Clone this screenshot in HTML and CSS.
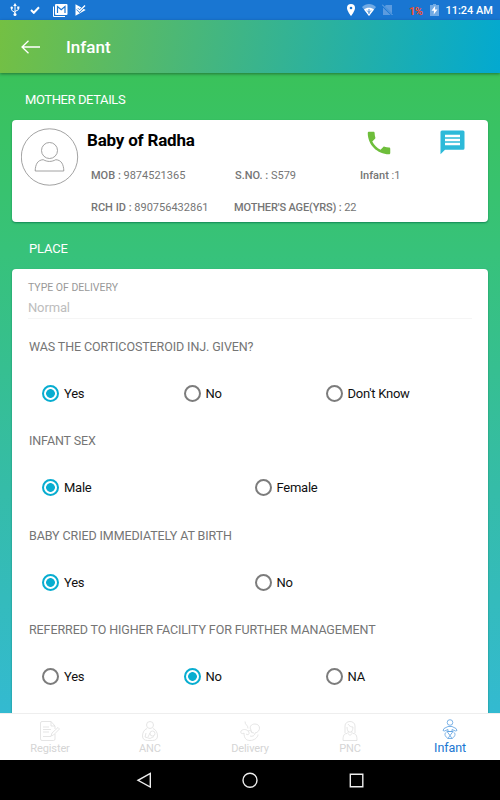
FILE: index.html
```html
<!DOCTYPE html>
<html lang="en">
<head>
    <meta charset="UTF-8">
    <meta name="viewport" content="width=device-width, initial-scale=1.0">
    <title>Infant</title>
    <link rel="stylesheet" href="styles.css">
</head>
<body>
    <!-- Status Bar -->
    <div class="status-bar">
        <div class="status-left">
            <svg class="usb-icon" width="10" height="14" viewBox="0 0 10 14">
                <path d="M5 2v9M1.7 5v2.3L5 9.6M8.3 4.5v2.3L5 8.5" fill="none" stroke="#fff"/>
                <path d="M5 0l1.8 3H3.2z" fill="#fff"/>
                <circle cx="5" cy="11.5" r="1.5" fill="#fff"/>
                <circle cx="1.7" cy="4.8" r="1.2" fill="#fff"/>
                <path d="M7.2 3.5h2.200v2.200H7.200z" fill="#fff"/>
            </svg>
            <svg class="check-icon" width="10" height="8" viewBox="0 0 10 8">
                <path d="M1 4l2.800 2.800L9 1.200" fill="none" stroke="#fff" stroke-width="2"/>
            </svg>
            <svg class="mail-icon" width="15" height="13" viewBox="0 0 15 13">
                <path d="M.5 2.500v10h11.500" fill="none" stroke="#fff"/>
                <path d="M3 0h10.500a1 1 0 0 1 1 1v9a1 1 0 0 1-1 1H3a1 1 0 0 1-1-1V1a1 1 0 0 1 1-1z" fill="#fff"/>
                <path d="M4.500 9V2.500l3.700 3.300L12 2.500V9" fill="none" stroke="#1976d2" stroke-width="1.200"/>
            </svg>
            <svg class="play-icon" width="11" height="12" viewBox="0 0 11 12">
                <path d="M.5.3L10.700 6 .5 11.700z" fill="#fff"/>
                <path d="M2.200 4.800l2.300 2.300L10 1.600" fill="none" stroke="#1976d2" stroke-width="2.600"/>
                <path d="M2.200 4.800l2.300 2.300L10 1.600" fill="none" stroke="#fff" stroke-width="1.400"/>
            </svg>
        </div>
        <div class="status-right">
            <svg class="pin-icon" width="8" height="12" viewBox="0 0 8 12">
                <path d="M4 0a4 4 0 0 0-4 4c0 3 4 8 4 8s4-5 4-8a4 4 0 0 0-4-4z" fill="#fff"/>
                <circle cx="4" cy="4" r="1.300" fill="#1976d2"/>
            </svg>
            <svg class="wifi-icon" width="14" height="12" viewBox="0 0 14 12">
                <path d="M7 12L0 3c4-4 10-4 14 0z" fill="#72abe4"/>
                <path d="M7 12L2 5.500c2.500-2.500 7.500-2.500 10 0z" fill="#fff"/>
                <path d="M5 6.500l2 2 2-2M7 5v5" fill="none" stroke="#1976d2" stroke-width=".8"/>
            </svg>
            <svg class="sim-icon" width="11" height="12" viewBox="0 0 11 12">
                <path d="M4 1h6v10H1V4z" fill="#5b9bdf"/>
                <path d="M0 1l10.500 10.500" stroke="#1976d2" stroke-width="2"/>
                <path d="M0 .5l10.500 10.500" stroke="#72abe4"/>
            </svg>
            <span class="percent">1%</span>
            <svg class="battery-icon" width="9" height="12" viewBox="0 0 9 12">
                <path d="M0 1h3V0h3v1h3v11H0z" fill="#72abe4"/>
                <path d="M5.200 1.800L1.500 6.700h2.500L3.700 10.500 7.500 5.500H5z" fill="#fff"/>
            </svg>
            <span class="clock">11:24 AM</span>
        </div>
    </div>

    <header>
        <svg class="back-icon" width="19" height="14" viewBox="0 0 19 14">
            <path d="M7.500.7L1 7l6.500 6.300M1 7h18" fill="none" stroke="#fff" stroke-width="1.300"/>
        </svg>
        <h1>Infant</h1>
    </header>

    <main>
        <h2 class="mother-title">MOTHER DETAILS</h2>

        <!-- Mother Card -->
        <section class="card mother-card">
            <svg class="avatar" width="58" height="58" viewBox="0 0 58 58" fill="none" stroke="#8a8a8a" stroke-width=".8">
                <circle cx="28.500" cy="29" r="28.200"/>
                <circle cx="28.500" cy="22.500" r="8"/>
                <path d="M14.200 43c.1-6.500 2.400-11 8-11.300 4.300 2.300 8.300 2.300 12.600 0 5.600.3 7.900 4.800 8 11.300z"/>
            </svg>
            <div class="mother-info">
                <div class="name-row">
                    <h3>Baby of Radha</h3>
                    <svg class="phone-icon" width="30" height="30" viewBox="0 0 24 24">
                        <path fill="#6ebe3b" d="M6.620 10.790c1.440 2.830 3.760 5.140 6.590 6.590l2.200-2.200c.27-.27.67-.36 1.020-.24 1.120.37 2.330.57 3.570.57.55 0 1 .45 1 1V20c0 .55-.45 1-1 1-9.390 0-17-7.610-17-17 0-.55.45-1 1-1h3.500c.55 0 1 .45 1 1 0 1.250.2 2.450.57 3.570.11.35.03.74-.25 1.020l-2.200 2.200z"/>
                    </svg>
                    <svg class="chat-icon" width="25" height="25" viewBox="0 0 25 25">
                        <path fill="#2dbad9" d="M2 .5h21a1.500 1.500 0 0 1 1.500 1.500v16.200a1.500 1.500 0 0 1-1.500 1.500H5L.5 24.300V2A1.500 1.500 0 0 1 2 .5z"/>
                        <path d="M5 6h15M5 10h15M5 14h15" stroke="#fff" stroke-width="2.600"/>
                    </svg>
                </div>
                <div class="details">
                    <p><b>MOB :</b> 9874521365</p>
                    <p><b>S.NO. :</b> S579</p>
                    <p><b>Infant</b> :1</p>
                </div>
                <div class="details second">
                    <p><b>RCH ID :</b> 890756432861</p>
                    <p class="age"><b>MOTHER'S AGE(YRS) :</b> 22</p>
                </div>
            </div>
        </section>

        <h2 class="place-title">PLACE</h2>

        <!-- Delivery Form -->
        <form class="card place-card">
            <label class="field-label" for="delivery">TYPE OF DELIVERY</label>
            <input type="text" id="delivery" value="Normal" disabled>

            <fieldset>
                <legend>WAS THE CORTICOSTEROID INJ. GIVEN?</legend>
                <div class="options three">
                    <label><input type="radio" name="steroid" checked>Yes</label>
                    <label><input type="radio" name="steroid">No</label>
                    <label><input type="radio" name="steroid">Don't Know</label>
                </div>
            </fieldset>
            <fieldset>
                <legend>INFANT SEX</legend>
                <div class="options">
                    <label><input type="radio" name="sex" checked>Male</label>
                    <label><input type="radio" name="sex">Female</label>
                </div>
            </fieldset>
            <fieldset>
                <legend>BABY CRIED IMMEDIATELY AT BIRTH</legend>
                <div class="options">
                    <label><input type="radio" name="cried" checked>Yes</label>
                    <label><input type="radio" name="cried">No</label>
                </div>
            </fieldset>
            <fieldset>
                <legend>REFERRED TO HIGHER FACILITY FOR FURTHER MANAGEMENT</legend>
                <div class="options three">
                    <label><input type="radio" name="referred">Yes</label>
                    <label><input type="radio" name="referred" checked>No</label>
                    <label><input type="radio" name="referred">NA</label>
                </div>
            </fieldset>
        </form>
    </main>

    <!-- Bottom Tabs -->
    <nav class="tabs">
        <a class="tab">
            <svg width="20" height="20" viewBox="0 0 20 20">
                <path d="M15 13v5q0 1.500-1.500 1.500H2Q.5 19.500.5 18V2Q.5.500 2 .5h9L15 5v3M11 .5V5h4M3 6h6M3 8.500h8M3 11h6M3 15.500h8M11 15l1-3 6-5.500 1.500 1.500-6 6z"/>
            </svg>
            <span>Register</span>
        </a>
        <a class="tab">
            <svg width="20" height="20" viewBox="0 0 20 20">
                <circle cx="10" cy="4" r="3.500"/>
                <circle cx="12.500" cy="12.500" r="2.500"/>
                <path d="M7 7.500C4 8.500 2.500 12 2.500 15c0 3 2 4.500 5 4.500h5c3 0 5-1.500 5-4.500s-1.500-6.500-4.500-7.500M6 12l-1 4 5 1.500 4-2M8 16l2-4"/>
            </svg>
            <span>ANC</span>
        </a>
        <a class="tab">
            <svg width="20" height="20" viewBox="0 0 20 20">
                <path d="M5 .5c0 4 3 3 3 7M1 10c-1 3 2 3 3 2 0 5 2 7.500 6 7.500 4 0 8-3 8-6M1 10c2-2 5-2 7 0s1 5-2 3M8 10c2-1 4 0 4 2M10 15c3 1 5-1 5-3 6-1 6-9 0-9-4 0-6 3-4 6 0 2 1 3 3 3"/>
            </svg>
            <span>Delivery</span>
        </a>
        <a class="tab">
            <svg width="20" height="20" viewBox="0 0 20 20">
                <path d="M5 12V5c0-6 10-6 10 0v7M7 6c0 7 6 7 6 0-2 0-4-1-5-3M8 10.500v2l2 2 2-2v-2M7 12.500c-3 0-4 2-4 7h14c0-5-1-7-4-7"/>
            </svg>
            <span>PNC</span>
        </a>
        <a class="tab active">
            <svg width="20" height="20" viewBox="0 0 20 20">
                <circle cx="10" cy="3.500" r="2.800"/>
                <path d="M8 7.500L4 9.500l-1 2 1.500.5L8 10.500v2h4v-2l3.500 1.500 1.500-.5-1-2-4-2zM7 12.500h6l-3 4zM6.500 13c-3 2-1 5 1.500 6.500l2-3M13.500 13c3 2 1 5-1.500 6.500l-2-3M8 19.500h4"/>
            </svg>
            <span>Infant</span>
        </a>
    </nav>

    <!-- Android Navigation -->
    <div class="system-nav">
        <svg width="16" height="16" viewBox="0 0 16 16"><path d="M14.300 1.500v13.500L2 8.300z"/></svg>
        <svg width="16" height="16" viewBox="0 0 16 16"><circle cx="8" cy="8.300" r="7"/></svg>
        <svg width="16" height="16" viewBox="0 0 16 16"><path d="M2.300 2.300h12.500v12.500H2.300z"/></svg>
    </div>
</body>
</html>
```

FILE: styles.css
```css
* {
    box-sizing: border-box;
}

body {
    display: flex;
    flex-direction: column;
    width: 500px;
    height: 800px;
    margin: 0;
    overflow: hidden;
    font-family: Roboto, sans-serif;
    color: #757575;
}

h1, h2, h3, p {
    margin: 0;
}

svg {
    display: block;
    flex: none;
}

.status-bar {
    display: flex;
    justify-content: space-between;
    height: 20px;
    padding: 0 7px 0 10px;
    background: #1976d2;
    color: #fff;
}

.status-left, .status-right {
    display: flex;
    align-items: center;
}

.check-icon {
    margin-left: 10px;
}

.mail-icon {
    margin-left: 13px;
}

.play-icon {
    margin-left: 7px;
}

.wifi-icon {
    margin-left: 7px;
}

.sim-icon {
    margin-left: 6px;
}

.percent {
    margin: 2px 0 0 16px;
    font-size: 11px;
    font-weight: 700;
    letter-spacing: -0.5px;
    color: #f4512c;
}

.battery-icon {
    margin-left: 8px;
}

.clock {
    margin-left: 6px;
    font-size: 11px;
    font-weight: 500;
}

header {
    display: flex;
    align-items: center;
    height: 53px;
    padding-left: 21px;
    background: linear-gradient(100deg, #74c043, #03a9d0);
    box-shadow: 0 1px 3px rgba(0, 0, 0, 0.4);
    z-index: 1;
}

h1 {
    margin-left: 26px;
    font-size: 17px;
    font-weight: 500;
    color: #fff;
}

main {
    flex: 1;
    min-height: 0;
    padding: 0 12px;
    overflow: hidden;
    background: linear-gradient(#3ac25a, #37c27a 28%, #35bca8 65%, #33bad1);
}

h2 {
    font-size: 13px;
    font-weight: 400;
    line-height: 16px;
    letter-spacing: -0.4px;
    color: #fff;
}

.mother-title {
    margin: 19px 0 12px 13px;
}

.place-title {
    margin: 19px 0 12px 17px;
    letter-spacing: -0.2px;
}

.card {
    background: #fff;
    border-radius: 4px;
    box-shadow: 0 1px 2px rgba(0, 110, 70, 0.7);
}

.mother-card {
    display: flex;
    height: 102px;
    padding: 8px 9px;
}

.mother-info {
    flex: 1;
    padding-left: 8px;
}

.name-row {
    display: flex;
    height: 30px;
}

h3 {
    width: 277px;
    margin-top: 2px;
    font-size: 17px;
    line-height: 20px;
    font-weight: 700;
    letter-spacing: -0.2px;
    color: #000;
}

.chat-icon {
    margin: 2px 0 0 46px;
}

.details {
    display: grid;
    grid-template-columns: 144px 125px 1fr;
    margin: 11px 0 0 4px;
    font-size: 11px;
    line-height: 14px;
}

.details p {
    white-space: nowrap;
}

.details b {
    font-weight: 500;
}

.details.second {
    grid-template-columns: 143px 1fr;
    margin-top: 18px;
}

.details .age {
    letter-spacing: -0.15px;
}

.place-card {
    height: 460px;
    padding: 12px 16px;
}

.field-label {
    display: block;
    font-size: 10.5px;
    line-height: 14px;
    color: #999;
}

input[type="text"] {
    display: block;
    width: 100%;
    height: 24px;
    padding: 2px 0 0;
    border: 0;
    border-bottom: 1px solid #f5f5f5;
    background: none;
    font-family: inherit;
    font-size: 13px;
    letter-spacing: -0.15px;
    color: #bdbdbd;
}

fieldset {
    height: 94.4px;
    margin: 0;
    padding: 0 0 0 1px;
    border: 0;
}

fieldset:first-of-type {
    margin-top: 20px;
}

legend {
    padding: 0;
    font-size: 12.5px;
    line-height: 16px;
    letter-spacing: -0.1px;
}

.options {
    display: grid;
    grid-template-columns: 212.5px 1fr;
    padding: 30px 0 0 13px;
}

.options.three {
    grid-template-columns: 141.5px 142px 1fr;
}

.options label {
    display: flex;
    align-items: center;
    font-size: 13px;
    line-height: 17px;
    letter-spacing: -0.25px;
    color: #111;
}

input[type="radio"] {
    appearance: none;
    width: 17px;
    height: 17px;
    margin: 0 5px 0 0;
    border: 2px solid #7c7c7c;
    border-radius: 50%;
}

input[type="radio"]:checked {
    border-color: #08add0;
    background: radial-gradient(circle, #08add0 4px, transparent 4.7px);
}

.tabs {
    display: flex;
    height: 47px;
    background: #fff;
    border-top: 1px solid #eee;
    z-index: 1;
}

.tab {
    display: flex;
    flex: 1;
    flex-direction: column;
    align-items: center;
    padding-top: 7px;
    font-size: 11px;
    line-height: 16px;
    letter-spacing: -0.1px;
    color: #d5d5d5;
}

.tab svg {
    fill: none;
    stroke: #dedede;
    stroke-width: 0.8;
}

.tab.active {
    padding-top: 5px;
    font-size: 12.5px;
    line-height: 18px;
    color: #1976d2;
}

.tab.active svg {
    stroke: #5c9fe0;
}

.system-nav {
    display: flex;
    justify-content: center;
    align-items: center;
    gap: 90px;
    height: 40px;
    background: #000;
}

.system-nav svg {
    fill: none;
    stroke: #eee;
    stroke-width: 1.4;
}
```
